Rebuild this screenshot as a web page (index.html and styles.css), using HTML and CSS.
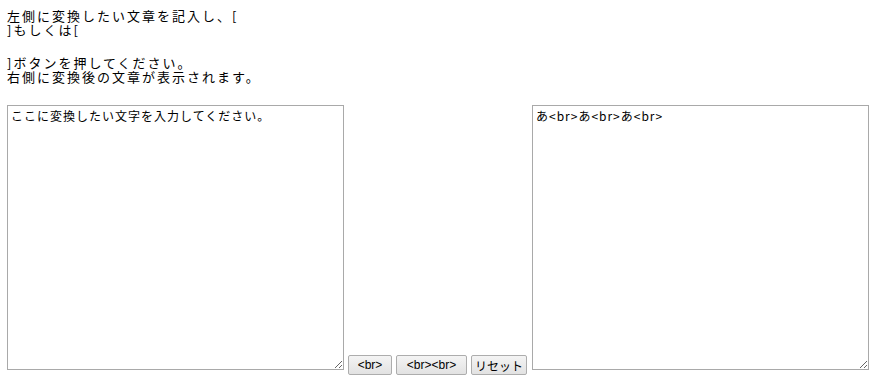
FILE: index.html
```html
<!DOCTYPE html>
<html lang="ja">
<head>
    <meta charset="UTF-8">
    <meta name="viewport" content="width=device-width, initial-scale=1.0">
    <title>改行タグ変換</title>
    <link rel="stylesheet" href="styles.css">
</head>
<body>
    <div class="intro">
        <div class="line">左側に変換したい文章を記入し、[</div>
        <div class="line">]もしくは[</div>
        <div class="blank"></div>
        <div class="line">]ボタンを押してください。</div>
        <div class="line">右側に変換後の文章が表示されます。</div>
    </div>

    <div class="converter">
        <textarea class="text-box" id="input">ここに変換したい文字を入力してください。</textarea>
        <div class="buttons">
            <button class="btn btn-br" id="btnBr">&lt;br&gt;</button>
            <button class="btn btn-brbr" id="btnBrBr">&lt;br&gt;&lt;br&gt;</button>
            <button class="btn btn-reset" id="btnReset">リセット</button>
        </div>
        <textarea class="text-box" id="output">あ&lt;br&gt;あ&lt;br&gt;あ&lt;br&gt;</textarea>
    </div>
</body>
</html>
```

FILE: styles.css
```css
* {
    margin: 0;
    padding: 0;
    box-sizing: border-box;
}

body {
    font-family: "Noto Sans CJK JP", "Noto Sans", sans-serif;
    color: #000;
    background-color: #fff;
    padding: 9px 0 0 7px;
}

/* 説明文 */
.intro {
    font-size: 13px;
    letter-spacing: 2px;
    line-height: 13.5px;
}

.blank {
    height: 20px;
}

/* 変換エリア */
.converter {
    display: flex;
    align-items: flex-start;
    margin-top: 22px;
}

.text-box {
    flex-shrink: 0;
    width: 337px;
    height: 265px;
    border: 1px solid #a9a9a9;
    padding: 2px 3px;
    font-family: "Noto Sans CJK JP", monospace;
    font-size: 12px;
    letter-spacing: 1px;
    line-height: 15px;
    color: #000;
    resize: both;
    outline: none;
}

.buttons {
    display: flex;
    flex-shrink: 0;
    gap: 4px;
    margin: 250px 5px 0 4px;
}

.btn {
    height: 20px;
    border: 1px solid #adadad;
    border-radius: 2px;
    background: linear-gradient(#f4f4f4, #e2e2e2);
    font-family: "Liberation Sans", "Noto Sans CJK JP", sans-serif;
    font-size: 12px;
    color: #000;
    cursor: pointer;
}

.btn:hover {
    background: linear-gradient(#eaf6fd, #d9f0fc);
    border-color: #3c7fb1;
}

.btn-br {
    width: 44px;
}

.btn-brbr {
    width: 71px;
}

.btn-reset {
    width: 56px;
}
```
